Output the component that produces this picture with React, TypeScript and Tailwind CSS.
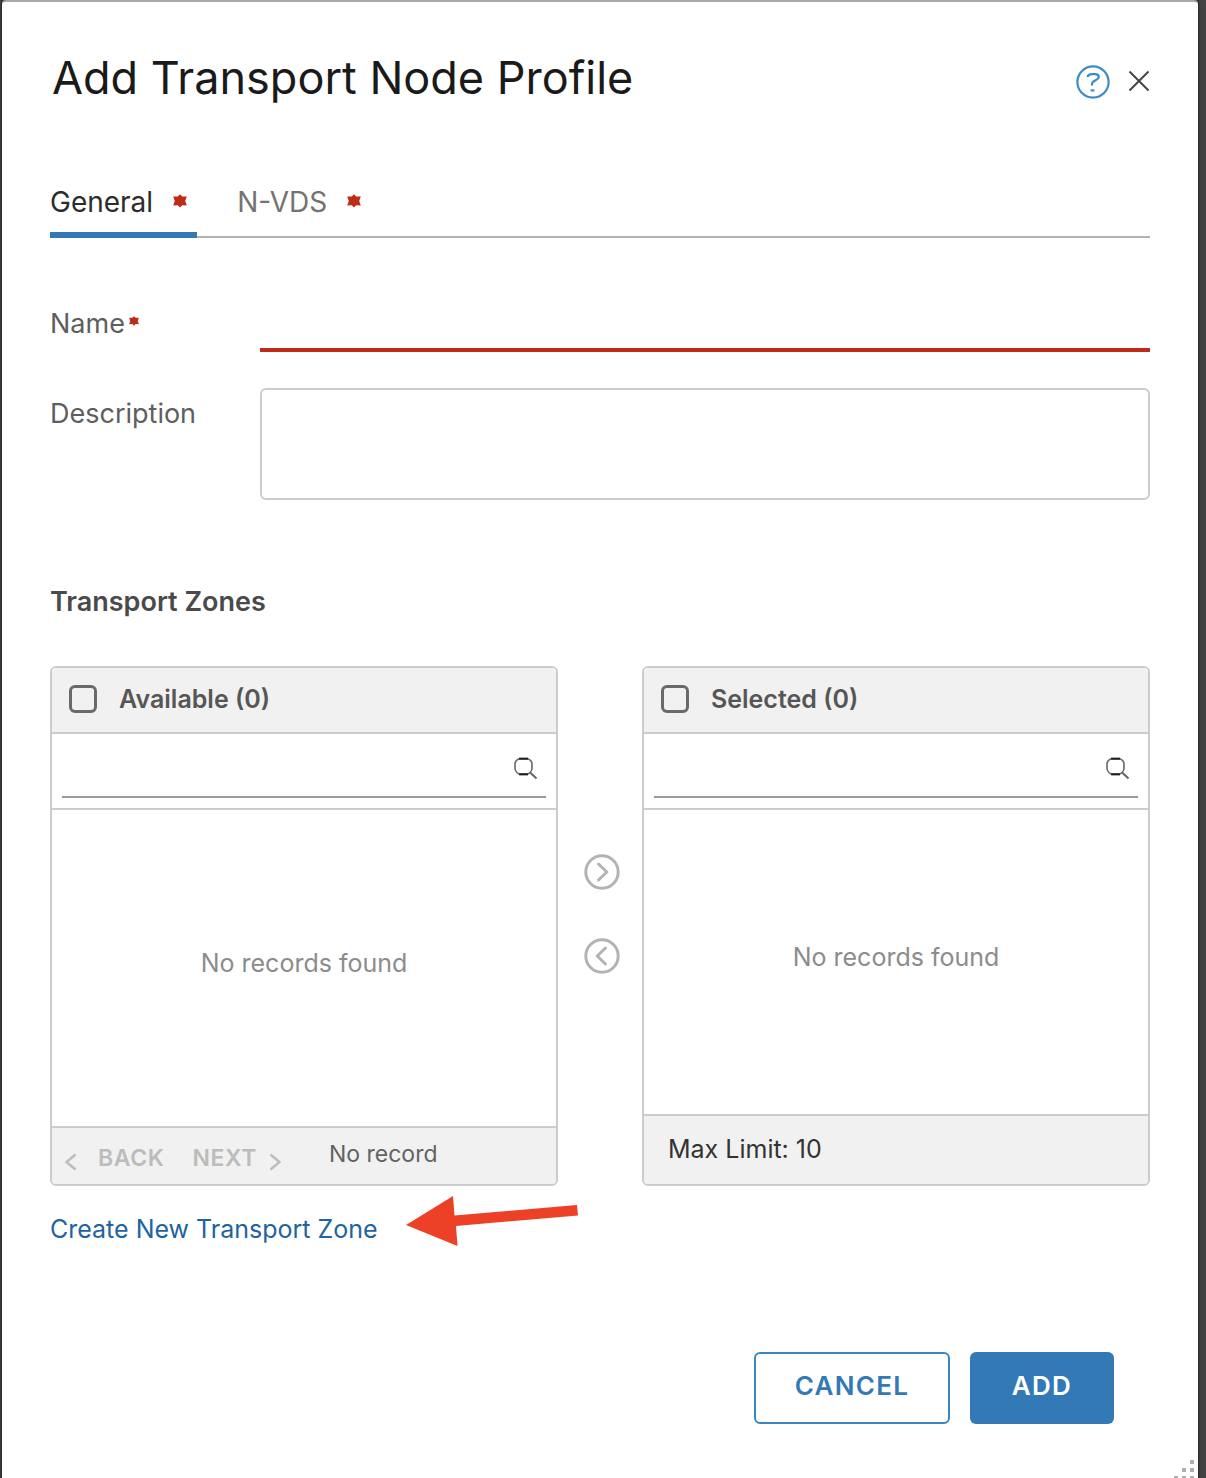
import { useState } from "react";
import type { ReactNode } from "react";

function RequiredMark({ className }: { className: string }) {
  return (
    <svg viewBox="0 0 14 14" className={className} aria-hidden="true">
      <path
        d="M7 0.2 9.2 2.6 13.8 2.4 12.2 7 13.8 11.4 9.2 11.2 7 13.6 4.8 11.2 0.2 11.4 1.8 7 0.2 2.4 4.8 2.6Z"
        fill="#bd2c16"
      />
    </svg>
  );
}

function Chevron({ dir, className }: { dir: "left" | "right"; className: string }) {
  return (
    <svg viewBox="0 0 12 18" className={className} fill="none" stroke="#bcbcbc" strokeWidth="2.4" aria-hidden="true">
      <path d={dir === "left" ? "M11.5 1.5 2.5 9 11.5 16.5" : "M1.5 1.5 10.5 9 1.5 16.5"} />
    </svg>
  );
}

function MoveButton({ dir, label }: { dir: "left" | "right"; label: string }) {
  return (
    <button type="button" aria-label={label} className="size-9">
      <svg viewBox="0 0 36 36" className="size-9" fill="none" stroke="#b3b3b3">
        <circle cx="18" cy="18" r="16.2" strokeWidth="3" />
        <path
          d={dir === "right" ? "M14.5 10 22.8 18 14.5 26" : "M21.5 10 13.2 18 21.5 26"}
          strokeWidth="3"
          strokeLinecap="round"
          strokeLinejoin="round"
        />
      </svg>
    </button>
  );
}

function ZonePanel({ id, title, children }: { id: string; title: string; children: ReactNode }) {
  return (
    <section className="flex h-[520px] min-w-0 flex-1 flex-col overflow-hidden rounded-md border-2 border-[#cccccc]">
      <div className="flex h-[66px] shrink-0 items-center gap-[22px] border-b-2 border-[#cccccc] bg-[#f1f1f1] px-4 pb-0.5">
        <input
          id={id + "-all"}
          type="checkbox"
          className="ml-px size-7 appearance-none rounded-md border-[3px] border-[#6a6a6a] checked:bg-[#3279b6]"
        />
        <label htmlFor={id + "-all"} className="text-[25px] leading-8 font-semibold text-[#565656]">
          {title}
        </label>
      </div>
      <div className="h-[76px] shrink-0 border-b-2 border-[#cccccc] px-[10px]">
        <div className="flex h-16 items-center border-b-2 border-[#9a9a9a] pr-2">
          <input
            type="text"
            aria-label={"Search " + title}
            className="h-full min-w-0 flex-1 bg-transparent text-2xl outline-none"
          />
          <svg viewBox="0 0 24 24" className="mt-1.5 size-6" fill="none" stroke="#666666" strokeWidth="1.6" aria-hidden="true">
            <path
              d="M6 2.6H13C15.5 3.4 18 5.400 18 8.2V12.2C18 15 15.500 17.600 13 18.400H6C3.5 17.600 1 15 1 12.200V8.200C1 5.400 3.500 3.400 6 2.600Z"
              strokeLinejoin="round"
            />
            <path d="M5 2.8H14M5 18.2H14" stroke="#222222" strokeWidth="2" />
            <path d="M15.8 16.200 22.500 22.500" strokeWidth="2" />
          </svg>
        </div>
      </div>
      {children}
    </section>
  );
}

const tabs = ["General", "N-VDS"];

export default function App() {
  const [active, setActive] = useState("General");
  return (
    <div className="min-h-screen bg-[#434343] pr-2 pl-0.5 font-['Inter','Noto_Sans',sans-serif]">
      <main
        role="dialog"
        aria-labelledby="dialog-title"
        className="relative flex min-h-screen flex-col rounded-t-sm border-t-2 border-[#a8a8a8] bg-white px-12 shadow-[0_0_2px_1px_#222222]"
      >
        <header className="flex items-center justify-between pt-12">
          <h1 id="dialog-title" className="pl-0.5 text-[45px] leading-[56px] text-[#1a1a1a]">
            Add Transport Node Profile
          </h1>
          <div className="flex items-center gap-[18px] pt-2">
            <button type="button" aria-label="Help" className="size-[34px]">
              <svg viewBox="0 0 34 34" className="size-[34px]" fill="none" stroke="#3a8cc4" strokeWidth="2.2">
                <circle cx="17" cy="17" r="15.6" />
                <path d="M11.5 12C12 10 13.5 9.2 16 9.2H19C21.5 9.2 22.8 10.4 22.8 12C22.8 15 16 15.4 16 18.8V20.6" />
                <path d="M14.6 25.4H18.4" />
              </svg>
            </button>
            <button type="button" aria-label="Close" className="mb-0.5 size-[22px]">
              <svg viewBox="0 0 22 22" className="size-[22px]" fill="none" stroke="#454545" strokeWidth="2">
                <path d="M1.5 1.5 20.5 20.5M20.5 1.5 1.5 20.5" />
              </svg>
            </button>
          </div>
        </header>

        <div role="tablist" className="mt-[70px] flex h-[62px] gap-10 border-b-2 border-[#b3b3b3]">
          {tabs.map((t) => (
            <button
              key={t}
              type="button"
              role="tab"
              aria-selected={active === t}
              onClick={() => setActive(t)}
              className={
                "-mb-0.5 flex items-start gap-5 border-b-6 pt-[10px] pr-2.5 text-[28px] leading-8 " +
                (active === t ? "border-[#3279b6] text-[#2c2c2c]" : "border-transparent text-[#737373]")
              }
            >
              {t}
              <RequiredMark className="mt-2 size-[14px]" />
            </button>
          ))}
        </div>

        <form className="flex flex-col" onSubmit={(e) => e.preventDefault()}>
          <div className="mt-[58px] flex">
            <label htmlFor="name" className="flex w-[210px] shrink-0 gap-1 pt-3 text-[27px] leading-8 text-[#5e5e5e]">
              Name
              <RequiredMark className="mt-2 size-[10px]" />
            </label>
            <input
              id="name"
              type="text"
              className="h-14 min-w-0 flex-1 border-b-4 border-[#bd2c16] text-[27px] outline-none"
            />
          </div>
          <div className="mt-9 flex">
            <label htmlFor="description" className="w-[210px] shrink-0 pt-[10px] text-[27px] leading-8 text-[#5e5e5e]">
              Description
            </label>
            <textarea
              id="description"
              className="h-28 min-w-0 flex-1 resize-none rounded-md border-2 border-[#cccccc] p-2 text-[27px] outline-none"
            />
          </div>

          <h2 className="mt-[86px] text-[27px] leading-8 font-semibold text-[#4a4a4a]">Transport Zones</h2>

          <div className="mt-12 flex">
            <ZonePanel id="available" title="Available (0)">
              <div className="flex flex-1 items-center justify-center pb-2 text-[25px] text-[#8c8c8c]">
                No records found
              </div>
              <div className="flex h-[58px] shrink-0 items-center border-t-2 border-[#cccccc] bg-[#f1f1f1] px-3 text-[23px] leading-8">
                <button type="button" disabled className="flex items-center gap-[22px] pt-1 font-semibold text-[#bcbcbc]">
                  <Chevron dir="left" className="mt-2 h-[18px] w-3" />
                  <span className="tracking-wide">BACK</span>
                </button>
                <button type="button" disabled className="ml-7 flex items-center gap-3 pt-1 font-semibold text-[#bcbcbc]">
                  <span className="tracking-wide">NEXT</span>
                  <Chevron dir="right" className="mt-2 h-[18px] w-3" />
                </button>
                <span className="ml-12 pb-1 text-[#626262]">No record</span>
              </div>
            </ZonePanel>
            <div className="flex w-[84px] shrink-0 flex-col items-center gap-12 pt-[188px] pl-1">
              <MoveButton dir="right" label="Move to selected" />
              <MoveButton dir="left" label="Move to available" />
            </div>
            <ZonePanel id="selected" title="Selected (0)">
              <div className="flex flex-1 items-center justify-center pb-2 text-[25px] text-[#8c8c8c]">
                No records found
              </div>
              <div className="flex h-[70px] shrink-0 items-center border-t-2 border-[#cccccc] bg-[#f1f1f1] px-6 text-[25px] text-[#333333]">
                Max Limit: 10
              </div>
            </ZonePanel>
          </div>

          <div className="mt-[10px] flex items-start gap-7">
            <a href="#create" className="pt-[17px] text-[25px] leading-8 text-[#1f63a0]">
              Create New Transport Zone
            </a>
            <svg viewBox="0 0 172 50" className="h-[50px] w-[172px]" aria-hidden="true">
              <path d="M0 29 47 0 48.5 19.5 171 9 172 19.5 50 30 51.5 50Z" fill="#ec4027" />
            </svg>
          </div>

          <div className="mt-[106px] flex justify-end gap-5 pr-9 pb-[54px] text-[26px] leading-8 font-semibold tracking-wider">
            <button type="button" className="h-[72px] w-[196px] rounded-md border-2 border-[#3a86c2] pb-1 text-[#3279b6]">
              CANCEL
            </button>
            <button type="submit" className="h-[72px] w-36 rounded-md bg-[#3279b6] pb-1 text-white">
              ADD
            </button>
          </div>
        </form>

        <svg viewBox="0 0 20 18" className="absolute right-1 bottom-0 h-[18px] w-5" fill="#b0b0b0" aria-hidden="true">
          <path d="M16 0h4v4h-4zM8 8h4v4h-4zM16 8h4v4h-4zM0 16h4v4h-4zM8 16h4v4h-4zM16 16h4v4h-4z" />
        </svg>
      </main>
    </div>
  );
}
